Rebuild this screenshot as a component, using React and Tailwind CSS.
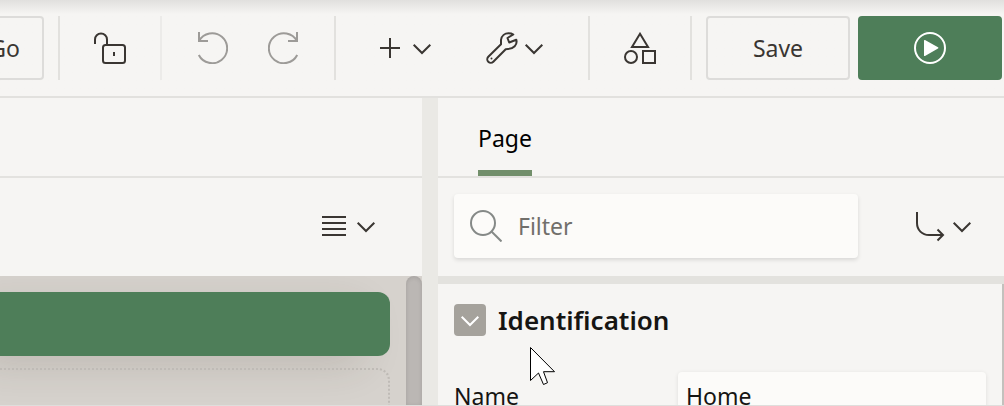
import React from "react";

function Icon({ children, className = "" }) {
  return (
    <svg
      viewBox="0 0 32 32"
      aria-hidden="true"
      className={`size-8 shrink-0 fill-none stroke-current stroke-2 ${className}`}
    >
      {children}
    </svg>
  );
}

function Chevron() {
  return (
    <Icon>
      <path d="M7.7 12.7 16 21l8.3-8.3" />
    </Icon>
  );
}

function IconButton({ label, className = "", children, ...rest }) {
  return (
    <button
      type="button"
      aria-label={label}
      className={`flex items-center justify-center ${className}`}
      {...rest}
    >
      {children}
    </button>
  );
}

function Divider({ className = "bg-[#e2e1de]" }) {
  return <div className={`w-0.5 shrink-0 self-stretch ${className}`} />;
}

function Toolbar() {
  return (
    <header className="border-b-2 border-[#e2e1de] bg-linear-to-b from-[#e1e0de] to-[#f6f5f3] to-[14px] py-4 pr-0.5">
      <div className="flex h-16">
        <button
          type="button"
          className="mr-3.5 flex w-11 shrink-0 items-center justify-end overflow-hidden rounded-r border-2 border-l-0 border-[#dddcda] pr-[22px]"
        >
          Go
        </button>
        <Divider />
        <IconButton label="Unlock" className="w-25">
          <Icon>
            <path d="M1 12V7.500a6 6 0 0 1 12 0V13" />
            <rect x="9" y="13" width="22" height="18" rx="2.500" />
            <path d="M20 20v4" />
          </Icon>
        </IconButton>
        <Divider className="bg-[#ecebe9]" />
        <div className="flex px-3.5 text-[#9d9b98]">
          <IconButton label="Undo" className="w-18" disabled>
            <Icon>
              <path d="M3 0v9h9M3 9A15 15 0 1 1 2.800 23" />
            </Icon>
          </IconButton>
          <IconButton label="Redo" className="w-18" disabled>
            <Icon>
              <path d="M29 0v9h-9M29 9A15 15 0 1 0 29.200 23" />
            </Icon>
          </IconButton>
        </div>
        <Divider />
        <div className="flex gap-12 px-[38px]">
          <IconButton label="Create">
            <Icon>
              <path d="M6 16h20M16 6v20" />
            </Icon>
            <Chevron />
          </IconButton>
          <IconButton label="Utilities">
            <Icon>
              <path
                strokeLinejoin="round"
                d="M2.300 24.700 15 12.200V8C15.500 3.500 19 1.200 22.500 1.200c2 0 3.500.4 4.800 1.300L21.500 6l1.700 4.500L30.300 7.700c.8 3-.1 5-1.600 6.500-2.500 2.600-5.200 3-9 3L7.300 29.700a3.500 3.500 0 0 1-5-5Z"
              />
              <circle cx="5.500" cy="26.500" r="1" className="fill-current stroke-none" />
            </Icon>
            <Chevron />
          </IconButton>
        </div>
        <Divider />
        <IconButton label="Shared Components" className="w-25">
          <Icon>
            <path d="M16 1.800 24 15H8Z" />
            <circle cx="7" cy="25" r="6" />
            <rect x="19" y="19" width="12" height="12" />
          </Icon>
        </IconButton>
        <Divider />
        <div className="ml-auto flex gap-2 pl-3.5">
          <button type="button" className="w-36 rounded border-2 border-[#dddcda]">
            Save
          </button>
          <IconButton
            label="Save and Run Page"
            className="w-36 rounded bg-[#4e7e59] text-white"
          >
            <Icon>
              <circle cx="16" cy="16" r="15" />
              <path
                d="M10 8.500c0-.5.500-.8 1-.5l13 7.300c.5.300.5.900 0 1.200L11 24c-.5.300-1 0-1-.5Z"
                className="fill-current stroke-none"
              />
            </Icon>
          </IconButton>
        </div>
      </div>
    </header>
  );
}

function LayoutPane() {
  return (
    <section aria-label="Layout" className="flex min-h-0 flex-col">
      <div className="h-20 shrink-0 border-b-2 border-[#e3e2df]" />
      <div className="flex justify-end pt-8 pr-10 pb-[34px]">
        <IconButton label="Layout options">
          <Icon>
            <path d="M4 7h24M4 13h24M4 19h24M4 25h24" />
          </Icon>
          <Chevron />
        </IconButton>
      </div>
      <div className="flex min-h-0 flex-1 overflow-hidden bg-[#d6d2cd]">
        <div className="flex-1 pt-4 pr-4">
          <div className="h-16 rounded-r-xl bg-[#4e7e59] shadow-[-24px_12px_40px_-4px_rgba(60,50,40,0.16)]" />
          <div className="mt-3 h-40 rounded-tr-xl border-2 border-b-0 border-l-0 border-dotted border-[#bfbbb6]" />
        </div>
        <div className="w-4 rounded-t-lg bg-[#bbb7b4] shadow-[inset_0_1px_4px_rgba(0,0,0,0.12)]" />
      </div>
    </section>
  );
}

function PropertyPane() {
  return (
    <section aria-label="Property editor" className="flex min-h-0 flex-col">
      <div role="tablist" className="flex h-20 shrink-0 border-b-2 border-[#e3e2df] px-10">
        <button
          type="button"
          role="tab"
          aria-selected="true"
          className="border-b-6 border-[#728f6b] pt-2 text-black"
        >
          Page
        </button>
      </div>
      <div className="flex items-center pt-4 pr-[26px] pb-[18px] pl-4">
        <label className="flex h-16 min-w-0 flex-1 items-center gap-4 rounded bg-[#fcfbf9] px-4 text-[#858987] shadow-[0_2px_4px_rgba(0,0,0,0.12)]">
          <Icon>
            <circle cx="13" cy="13" r="12" />
            <path d="m21.500 21.500 10 10" />
          </Icon>
          <input
            type="text"
            aria-label="Filter"
            placeholder="Filter"
            className="min-w-0 flex-1 bg-transparent outline-none placeholder:text-[#716f6b]"
          />
        </label>
        <IconButton label="Go to group" className="ml-14">
          <Icon>
            <path d="M3 2v11c0 7 5 12 12 12h13.500M23.500 19.500 29 25l-5.500 5.500" />
          </Icon>
          <Chevron />
        </IconButton>
      </div>
      <div className="h-2 shrink-0 bg-[#e3e2de]" />
      <div className="flex min-h-0 flex-1 overflow-hidden">
        <div className="min-w-0 flex-1 pt-5 pr-4 pl-4">
          <div className="flex h-8 items-center gap-3">
            <IconButton
              label="Collapse Identification"
              className="size-8 rounded bg-[#a5a29c] text-white"
            >
              <Chevron />
            </IconButton>
            <h2 className="text-[26px] leading-8 font-semibold text-[#161513]">
              Identification
            </h2>
          </div>
          <div className="mt-9 flex items-center">
            <label htmlFor="page-name" className="w-56 shrink-0 text-[#161513]">
              Name
            </label>
            <input
              id="page-name"
              type="text"
              defaultValue="Home"
              className="h-12 min-w-0 flex-1 rounded bg-[#fcfbf9] px-2 text-[#161513] shadow-[0_1px_4px_rgba(0,0,0,0.1)] outline-none"
            />
          </div>
        </div>
        <div className="w-0.5 bg-[#c3c1bd]" />
      </div>
    </section>
  );
}

function Pointer() {
  return (
    <svg
      viewBox="0 0 26 40"
      aria-hidden="true"
      className="absolute top-[347px] left-[530px] h-10 w-[26px] fill-white stroke-black stroke-1"
    >
      <path d="M.5.500v33l8-7.500 5 11.500 4-1.800-4-11h11Z" />
    </svg>
  );
}

export default function App() {
  return (
    <div className="relative flex h-screen flex-col overflow-hidden border-b border-[#dfdedc] bg-[#f6f5f3] font-['Noto_Sans',sans-serif] text-[23px] leading-8 text-[#3a3632]">
      <Toolbar />
      <main className="grid min-h-0 flex-1 grid-cols-[minmax(0,422fr)_16px_minmax(0,566fr)] grid-rows-[minmax(0,1fr)]">
        <LayoutPane />
        <div className="bg-[#eae9e5]" />
        <PropertyPane />
      </main>
      <Pointer />
    </div>
  );
}
